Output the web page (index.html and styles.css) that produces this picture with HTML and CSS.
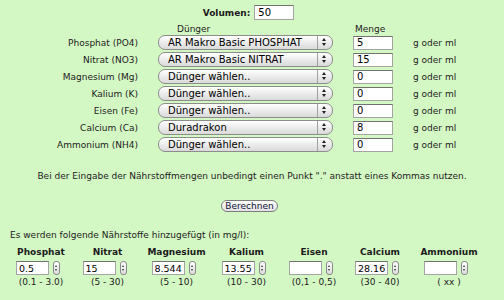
FILE: index.html
```html
<!DOCTYPE html>
<html lang="de">
<head>
  <meta charset="UTF-8">
  <title>Dünger Rechner</title>
  <link rel="stylesheet" href="styles.css">
</head>
<body>

  <div class="volume">
    <b>Volumen:</b>
    <input type="text" class="num" id="volumen" value="50">
  </div>

  <div class="dose-head">
    <span></span>
    <span class="head-duenger">Dünger</span>
    <span class="head-menge">Menge</span>
    <span></span>
  </div>

  <div class="dose">
    <label>Phosphat (PO4)</label>
    <span class="pick"><select><option>AR Makro Basic PHOSPHAT</option></select></span>
    <input type="text" class="num" value="5">
    <span class="unit">g oder ml</span>

    <label>Nitrat (NO3)</label>
    <span class="pick"><select><option>AR Makro Basic NITRAT</option></select></span>
    <input type="text" class="num" value="15">
    <span class="unit">g oder ml</span>

    <label>Magnesium (Mg)</label>
    <span class="pick"><select><option>Dünger wählen..</option></select></span>
    <input type="text" class="num" value="0">
    <span class="unit">g oder ml</span>

    <label>Kalium (K)</label>
    <span class="pick"><select><option>Dünger wählen..</option></select></span>
    <input type="text" class="num" value="0">
    <span class="unit">g oder ml</span>

    <label>Eisen (Fe)</label>
    <span class="pick"><select><option>Dünger wählen..</option></select></span>
    <input type="text" class="num" value="0">
    <span class="unit">g oder ml</span>

    <label>Calcium (Ca)</label>
    <span class="pick"><select><option>Duradrakon</option></select></span>
    <input type="text" class="num" value="8">
    <span class="unit">g oder ml</span>

    <label>Ammonium (NH4)</label>
    <span class="pick"><select><option>Dünger wählen..</option></select></span>
    <input type="text" class="num" value="0">
    <span class="unit">g oder ml</span>
  </div>

  <p class="hint">Bei der Eingabe der Nährstoffmengen unbedingt einen Punkt "." anstatt eines Kommas nutzen.</p>

  <div class="actions">
    <button type="button">Berechnen</button>
  </div>

  <p class="result-title">Es werden folgende Nährstoffe hinzugefügt (in mg/l):</p>

  <div class="results">
    <div class="nut">
      <h4>Phosphat</h4>
      <div class="field"><input type="text" value="0.5"><span class="spin"></span></div>
      <span>(0.1 - 3.0)</span>
    </div>
    <div class="nut">
      <h4>Nitrat</h4>
      <div class="field"><input type="text" value="15"><span class="spin"></span></div>
      <span>(5 - 30)</span>
    </div>
    <div class="nut">
      <h4>Magnesium</h4>
      <div class="field"><input type="text" value="8.5446"><span class="spin"></span></div>
      <span>(5 - 10)</span>
    </div>
    <div class="nut">
      <h4>Kalium</h4>
      <div class="field"><input type="text" value="13.559"><span class="spin"></span></div>
      <span>(10 - 30)</span>
    </div>
    <div class="nut">
      <h4>Eisen</h4>
      <div class="field"><input type="text" value=""><span class="spin"></span></div>
      <span>(0,1 - 0,5)</span>
    </div>
    <div class="nut">
      <h4>Calcium</h4>
      <div class="field"><input type="text" value="28.163"><span class="spin"></span></div>
      <span>(30 - 40)</span>
    </div>
    <div class="nut">
      <h4>Ammonium</h4>
      <div class="field"><input type="text" value=""><span class="spin"></span></div>
      <span>( xx )</span>
    </div>
  </div>

</body>
</html>
```

FILE: styles.css
```css
body {
  margin: 0;
  padding: 5px 8px 0;
  background-color: #d4f8c4;
  font-family: "DejaVu Sans", Verdana, sans-serif;
  font-size: 9px;
  color: #1c1c1c;
}

input, select, button {
  font-family: "DejaVu Sans", Verdana, sans-serif;
  color: #000;
}

.num {
  width: 40px;
  height: 15px;
  box-sizing: border-box;
  border: 1px solid #a4a4a4;
  border-top-color: #727272;
  background: #fff;
  font-size: 10px;
  padding: 0 3px;
  margin: 0;
}

/* Volumen oben */
.volume {
  display: flex;
  justify-content: center;
  align-items: center;
  gap: 4px;
  height: 15px;
  padding-right: 7px;
}

/* Dünger Tabelle */
.dose-head,
.dose {
  display: grid;
  grid-template-columns: 130px 175px 40px auto;
  column-gap: 20px;
}

.dose-head {
  margin-top: 4px;
  line-height: 11px;
}

.head-duenger {
  padding-left: 19px;
}

.head-menge {
  padding-left: 2px;
}

.dose {
  row-gap: 2px;
  align-items: center;
  margin-top: 0;
}

.dose label {
  text-align: right;
}

.dose .num {
  height: 14px;
}

.pick {
  position: relative;
  height: 15px;
}

.pick select {
  appearance: none;
  -webkit-appearance: none;
  display: block;
  width: 175px;
  height: 15px;
  box-sizing: border-box;
  margin: 0;
  border: 1px solid #8c8c8c;
  border-radius: 7px;
  padding: 0 20px 0 9px;
  font-size: 10px;
  line-height: 13px;
  background:
    linear-gradient(to right, transparent 158px, #a0a0a0 158px, #a0a0a0 159px, transparent 159px),
    linear-gradient(#ffffff, #ececec 50%, #dadada);
}

.pick::before,
.pick::after {
  content: "";
  position: absolute;
  right: 7px;
  border-left: 2.5px solid transparent;
  border-right: 2.5px solid transparent;
}

.pick::before {
  top: 3px;
  border-bottom: 3px solid #222;
}

.pick::after {
  top: 8px;
  border-top: 3px solid #222;
}

.unit {
  padding-left: 0;
}

.hint {
  margin: 19px 0 0;
  line-height: 11px;
  text-align: center;
}

.actions {
  margin-top: 18px;
  text-align: center;
  padding-right: 5px;
}

.actions button {
  height: 12px;
  box-sizing: border-box;
  padding: 0 3px;
  border: 1px solid #7c7c7c;
  border-radius: 6px;
  background: linear-gradient(#ffffff, #e2e2e2);
  font-size: 9px;
  line-height: 9px;
  color: #10103a;
}

.result-title {
  margin: 18px 0 0 2px;
  line-height: 11px;
}

/* Ergebnis Spalten */
.results {
  display: grid;
  grid-template-columns: 66px 67px 71px 69px 66px 66px 72px;
  margin-top: 6px;
  text-align: center;
}

.nut {
  display: flex;
  flex-direction: column;
  align-items: center;
  line-height: 11px;
}

.nut h4 {
  margin: 0;
  font-size: 9px;
}

.field {
  display: flex;
  gap: 4px;
  margin: 3px 0 2px;
  padding-right: 6px;
}

.field input {
  width: 33px;
  height: 14px;
  box-sizing: border-box;
  margin: 0;
  border: 1px solid #a4a4a4;
  border-top-color: #727272;
  background: #fff;
  padding: 0 2px;
  font-size: 9.5px;
}

.spin {
  position: relative;
  width: 7px;
  height: 14px;
  box-sizing: border-box;
  border: 1px solid #8a8a8a;
  border-radius: 3px;
  background: linear-gradient(#ffffff, #dcdcdc);
}

.spin::before,
.spin::after {
  content: "";
  position: absolute;
  left: 1px;
  border-left: 1.5px solid transparent;
  border-right: 1.5px solid transparent;
}

.spin::before {
  top: 3px;
  border-bottom: 2px solid #333;
}

.spin::after {
  bottom: 3px;
  border-top: 2px solid #333;
}
```
